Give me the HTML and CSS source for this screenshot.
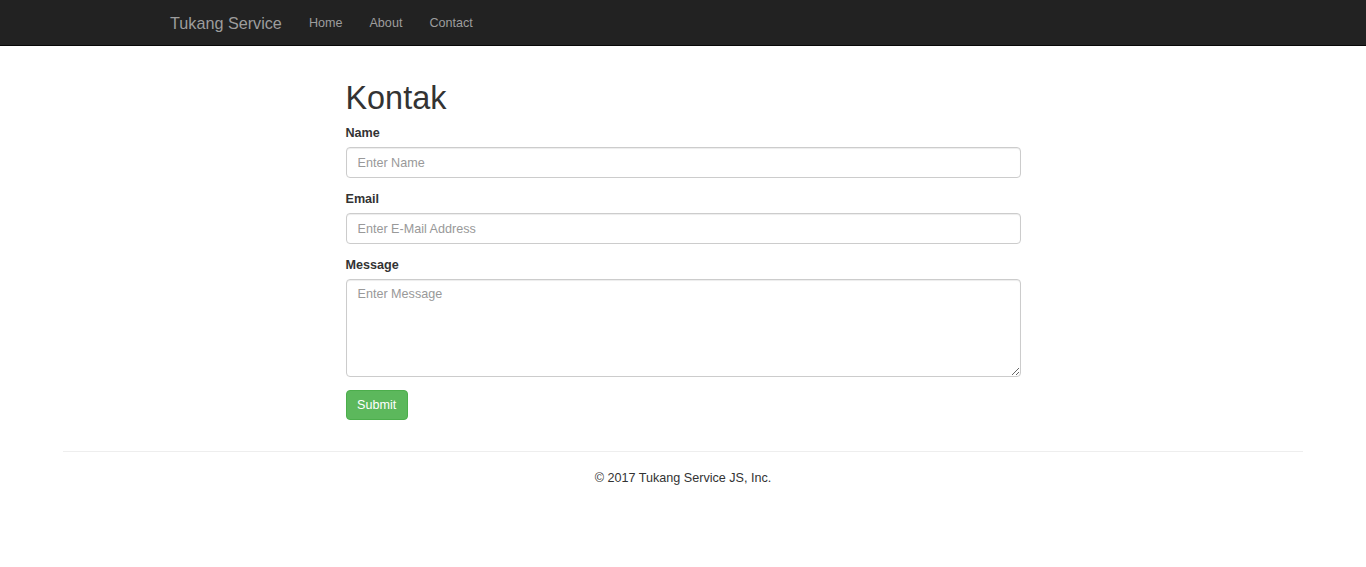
FILE: index.html
```html
<!DOCTYPE html>
<html lang="id">
<head>
<meta charset="utf-8">
<title>Kontak - Tukang Service</title>
<link rel="stylesheet" href="styles.css">
</head>
<body>
<nav class="navbar">
  <div class="navbar-inner">
    <a class="brand" href="#">Tukang Service</a>
    <ul class="nav">
      <li><a href="#">Home</a></li>
      <li><a href="#">About</a></li>
      <li><a href="#">Contact</a></li>
    </ul>
  </div>
</nav>
<main class="content">
  <h1 class="title">Kontak</h1>
  <form class="form">
    <div class="form-group">
      <label for="name">Name</label>
      <input id="name" class="form-control" type="text" placeholder="Enter Name">
    </div>
    <div class="form-group">
      <label for="email">Email</label>
      <input id="email" class="form-control" type="email" placeholder="Enter E-Mail Address">
    </div>
    <div class="form-group last">
      <label for="message">Message</label>
      <textarea id="message" class="form-control textarea" placeholder="Enter Message"></textarea>
    </div>
    <button type="button" class="btn-success">Submit</button>
  </form>
</main>
<footer class="footer">
  <hr class="rule">
  <p class="copy">&copy; 2017 Tukang Service JS, Inc.</p>
</footer>
</body>
</html>
```
FILE: styles.css
```css
* { box-sizing: border-box; }
html, body {
  margin: 0;
  padding: 0;
  background: #fff;
  font-family: "Liberation Sans", Arial, sans-serif;
  font-size: 12.6px;
  line-height: 18px;
  color: #333;
}
a { text-decoration: none; }

.navbar {
  background: #222;
  border-bottom: 1px solid #080808;
  height: 46px;
}
.navbar-inner {
  display: flex;
  align-items: center;
  height: 45px;
  padding-left: 156.5px;
}
.brand {
  color: #9d9d9d;
  font-size: 16.2px;
  line-height: 18px;
  padding: 0 13.5px;
  margin-top: 1px;
}
.nav {
  display: flex;
  list-style: none;
  margin: 0;
  padding: 0;
}
.nav a {
  display: block;
  color: #9d9d9d;
  padding: 0 13.5px;
  line-height: 18px;
}

.content {
  width: 675px;
  margin: 0 auto;
  padding-top: 34px;
}
.title {
  font-size: 32.4px;
  font-weight: 500;
  line-height: 36px;
  margin: 0 0 8px;
  color: #333;
}
.form-group {
  margin-bottom: 12px;
}
.form-group.last { margin-bottom: 13px; }
.form-group label {
  display: block;
  font-weight: bold;
  margin-bottom: 5px;
}
.form-control {
  display: block;
  width: 100%;
  height: 31px;
  padding: 5px 11px;
  font-family: inherit;
  font-size: 12.6px;
  line-height: 18px;
  color: #555;
  background: #fff;
  border: 1px solid #ccc;
  border-radius: 4px;
  box-shadow: inset 0 1px 1px rgba(0,0,0,.075);
  margin: 0;
}
.form-control::placeholder { color: #999; }
.textarea {
  height: 98px;
  resize: vertical;
}
.btn-success {
  display: block;
  height: 30px;
  padding: 0 10.5px;
  font-family: inherit;
  font-size: 12.6px;
  color: #fff;
  background: #5cb85c;
  border: 1px solid #4cae4c;
  border-radius: 4px;
}

.footer {
  width: 1240px;
  margin: 31px auto 0;
}
.rule {
  border: 0;
  border-top: 1px solid #eee;
  margin: 0;
  height: 0;
}
.copy {
  text-align: center;
  margin: 17px 0 0;
}
```
